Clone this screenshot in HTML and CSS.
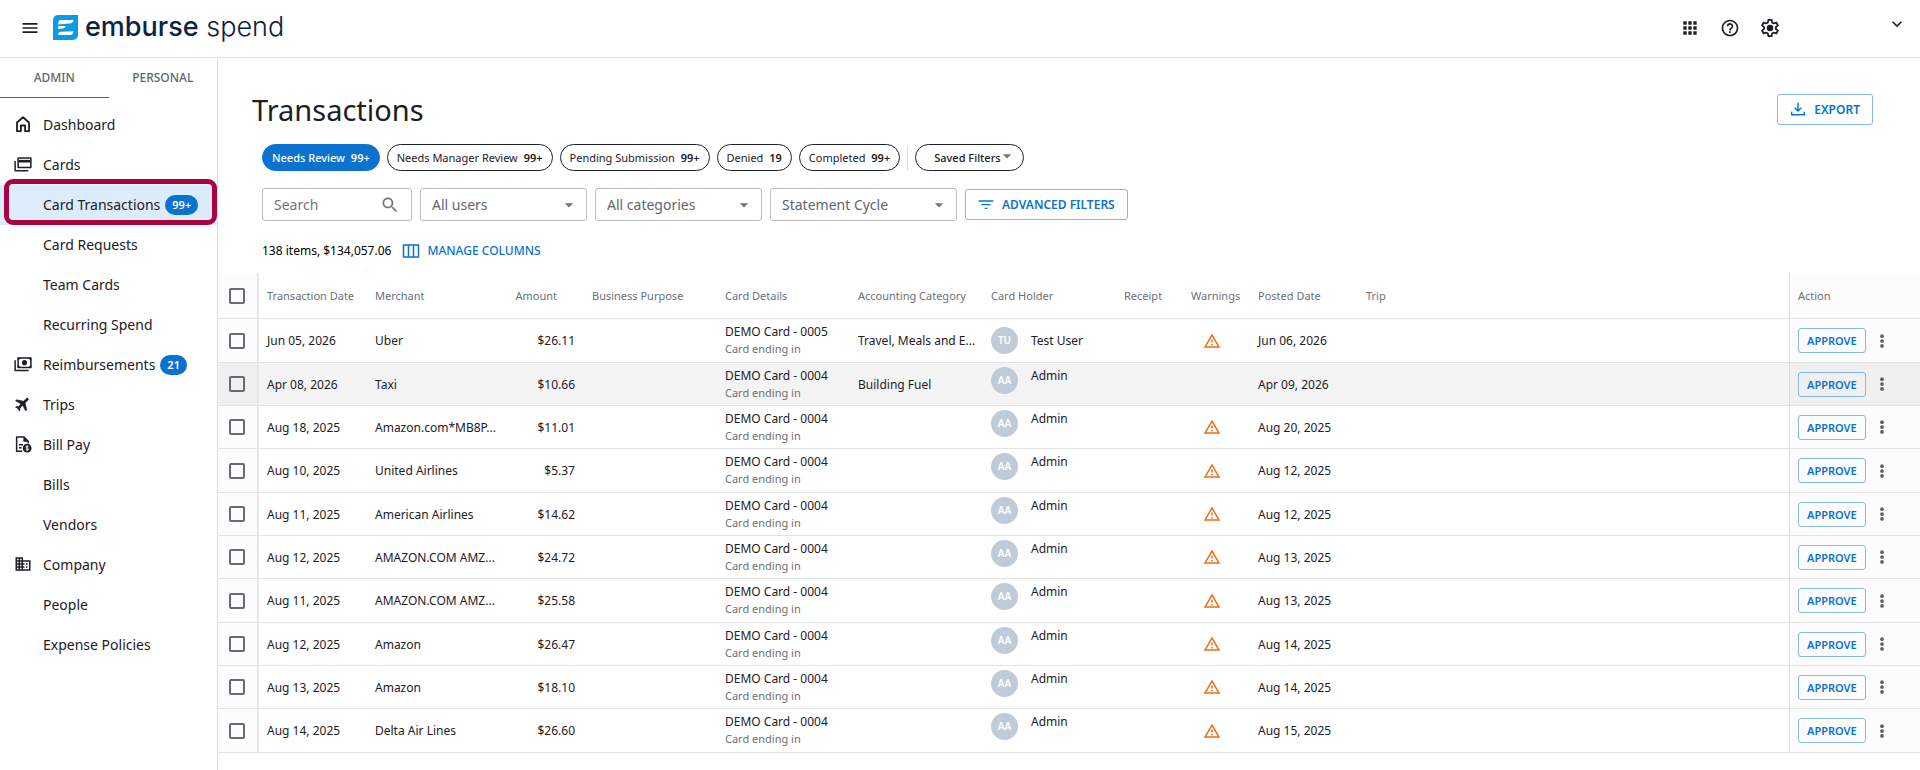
FILE: index.html
```html
<!DOCTYPE html>
<html lang="en">
  <head>
    <meta charset="UTF-8" />
    <meta name="viewport" content="width=device-width, initial-scale=1.0" />
    <title>Transactions - Emburse Spend</title>
    <link rel="stylesheet" href="styles.css">
  </head>
  <body>
    <!-- Shared icons -->
    <svg class="sprite" aria-hidden="true">
      <symbol id="i-warning" viewBox="0 0 24 24">
        <path d="M12 5.99L19.53 19H4.47L12 5.99M12 2L1 21h22L12 2zm1 14h-2v2h2v-2zm0-6h-2v4h2v-4z" />
      </symbol>
      <symbol id="i-more" viewBox="0 0 24 24">
        <circle cx="12" cy="5.5" r="2.5" />
        <circle cx="12" cy="12" r="2.5" />
        <circle cx="12" cy="18.5" r="2.5" />
      </symbol>
      <symbol id="i-caret" viewBox="0 0 24 24">
        <path d="M7 10l5 5 5-5z" />
      </symbol>
    </svg>

    <header class="topbar">
      <button class="icon-btn" aria-label="Menu">
        <svg viewBox="0 0 24 24"><path d="M3 18h18v-2H3v2zm0-5h18v-2H3v2zm0-7v2h18V6H3z" /></svg>
      </button>
      <a href="#" class="logo">
        <svg viewBox="0 0 25 25">
          <path d="M5 0h20v20a5 5 0 0 1-5 5H0V5a5 5 0 0 1 5-5z" fill="#0a9be3" />
          <path d="M8 5h12.500q-.6 3.400-4 3.600L5.200 9.600Q5 5 8 5z" fill="#fff" />
          <path d="M5.200 10.900h7.600q-.6 2.400-3 2.600l-4.600.5z" fill="#fff" />
          <path d="M5 20q.2-3 3-3.200l12.500-.6q-.4 3.600-3.600 3.800z" fill="#fff" />
        </svg>
        <span class="logo-text"><b>emburse</b> spend</span>
      </a>
      <div class="topbar-actions">
        <button class="icon-btn" aria-label="Apps">
          <svg viewBox="0 0 24 24"><path d="M4 8h4V4H4v4zm6 12h4v-4h-4v4zm-6 0h4v-4H4v4zm0-6h4v-4H4v4zm6 0h4v-4h-4v4zm6-10v4h4V4h-4zm-6 4h4V4h-4v4zm6 6h4v-4h-4v4zm0 6h4v-4h-4v4z" /></svg>
        </button>
        <button class="icon-btn" aria-label="Help">
          <svg viewBox="0 0 24 24"><path d="M11 18h2v-2h-2v2zm1-16C6.480 2 2 6.480 2 12s4.480 10 10 10 10-4.480 10-10S17.520 2 12 2zm0 18c-4.410 0-8-3.590-8-8s3.590-8 8-8 8 3.590 8 8-3.590 8-8 8zm0-14c-2.210 0-4 1.790-4 4h2c0-1.100.9-2 2-2s2 .9 2 2c0 2-3 1.750-3 5h2c0-2.250 3-2.500 3-5 0-2.210-1.790-4-4-4z" /></svg>
        </button>
        <button class="icon-btn" aria-label="Settings">
          <svg viewBox="1 1 22 22">
            <path fill="none" stroke="currentColor" stroke-width="2" stroke-linejoin="round" d="M10.200 3h3.600l.5 2.900 1.900 1.100 2.700-1 1.800 3.100-2.200 1.900v2.100l2.200 1.800-1.800 3.100-2.700-1-1.900 1.100-.5 2.900h-3.600l-.5-2.900L7.800 17l-2.700 1-1.800-3.100L5.500 13v-2L3.300 9.100 5.100 6l2.700 1 1.900-1.100z" />
            <circle cx="12" cy="12" r="3.600" />
          </svg>
        </button>
        <button class="icon-btn account-btn" aria-label="Account">
          <svg viewBox="0 0 24 24"><path d="M16.590 8.590L12 13.170 7.410 8.590 6 10l6 6 6-6z" /></svg>
        </button>
      </div>
    </header>

    <div class="layout">
      <aside class="sidebar">
        <div class="tabs">
          <button class="tab active">ADMIN</button>
          <button class="tab">PERSONAL</button>
        </div>
        <nav class="menu">
          <a href="#" class="menu-item">
            <svg viewBox="0 0 24 24"><path fill="none" stroke="currentColor" stroke-width="2.400" stroke-linejoin="round" d="M4 10l8-7 8 7v11.500h-5.200V14H9.200v7.500H4z" /></svg>
            Dashboard
          </a>
          <a href="#" class="menu-item">
            <svg viewBox="0 0 24 24">
              <path fill="none" stroke="currentColor" stroke-width="2" stroke-linejoin="round" d="M5.500 4h17v12.500h-17zM1.500 8v13h17.500" />
              <path d="M6 6.500h16v3.500H6z" />
            </svg>
            Cards
          </a>
          <a href="#" class="menu-item selected">Card Transactions <span class="badge">99+</span></a>
          <a href="#" class="menu-item">Card Requests</a>
          <a href="#" class="menu-item">Team Cards</a>
          <a href="#" class="menu-item">Recurring Spend</a>
          <a href="#" class="menu-item">
            <svg viewBox="0 0 24 24">
              <path fill="none" stroke="currentColor" stroke-width="2" stroke-linejoin="round" d="M5.500 4h17v12.500h-17zM1.500 7v13.500h18" />
              <path d="M5 3.500h4.500L5 8zM23 3.500h-4.500L23 8zM5 17h4.500L5 12.500zM23 17h-4.500l4.500-4.500z" />
              <circle cx="14" cy="10.200" r="3.400" />
            </svg>
            Reimbursements <span class="badge">21</span>
          </a>
          <a href="#" class="menu-item">
            <svg viewBox="0 0 24 24"><path transform="rotate(45 12 12)" stroke="currentColor" stroke-width=".8" d="M21 16v-2l-8-5V3.500c0-.83-.67-1.500-1.500-1.500S10 2.670 10 3.500V9l-8 5v2l8-2.500V19l-2 1.500V22l3.500-1 3.500 1v-1.500L13 19v-5.500l8 2.500z" /></svg>
            Trips
          </a>
          <a href="#" class="menu-item">
            <svg viewBox="0 0 24 24">
              <path fill="none" stroke="currentColor" stroke-width="2" stroke-linejoin="round" d="M11 21.500H3.500v-19H13l6 6V11M6.500 13H12M6.500 17H10" />
              <path d="M12.500 2.500v6.500H19z" />
              <circle cx="17.500" cy="17.500" r="5.800" />
              <path fill="none" stroke="#fff" stroke-width="1.200" d="M19.400 15.700q-1.800-1.300-3.300-.3c-.9 1 .3 1.900 1.500 2.200 1.400.3 2.300 1.100 1.300 2q-1.500.9-3.300-.3M17.500 13.700v7.600" />
            </svg>
            Bill Pay
          </a>
          <a href="#" class="menu-item">Bills</a>
          <a href="#" class="menu-item">Vendors</a>
          <a href="#" class="menu-item">
            <svg viewBox="0 0 24 24"><path d="M12 7V3H2v18h20V7H12zM6 19H4v-2h2v2zm0-4H4v-2h2v2zm0-4H4V9h2v2zm0-4H4V5h2v2zm4 12H8v-2h2v2zm0-4H8v-2h2v2zm0-4H8V9h2v2zm0-4H8V5h2v2zm10 12h-8v-2h2v-2h-2v-2h2v-2h-2V9h8v10zm-2-8h-2v2h2v-2zm0 4h-2v2h2v-2z" /></svg>
            Company
          </a>
          <a href="#" class="menu-item">People</a>
          <a href="#" class="menu-item">Expense Policies</a>
        </nav>
      </aside>

      <main class="main">
        <div class="page-header">
          <h1>Transactions</h1>
          <button class="btn">
            <svg viewBox="0 0 24 24"><path fill="none" stroke="currentColor" stroke-width="2.200" d="M12 2.500v12M7 10l5 5 5-5M2.500 16v4.500h19V16" /></svg>
            EXPORT
          </button>
        </div>

        <div class="chips">
          <button class="chip chip-active">Needs Review <b>99+</b></button>
          <button class="chip">Needs Manager Review <b>99+</b></button>
          <button class="chip">Pending Submission <b>99+</b></button>
          <button class="chip">Denied <b>19</b></button>
          <button class="chip">Completed <b>99+</b></button>
          <span class="chip-divider"></span>
          <div class="saved-filters">
            <select aria-label="Saved Filters"><option>Saved Filters</option></select>
            <svg><use href="#i-caret" /></svg>
          </div>
        </div>

        <div class="filters">
          <div class="field field-search">
            <input type="text" placeholder="Search" aria-label="Search" />
            <svg viewBox="0 0 24 24"><path d="M15.500 14h-.79l-.28-.27C15.410 12.590 16 11.110 16 9.500 16 5.910 13.090 3 9.500 3S3 5.910 3 9.500 5.910 16 9.500 16c1.610 0 3.090-.59 4.230-1.570l.27.28v.79l5 4.990L20.490 19l-4.990-5zm-6 0C7.010 14 5 11.990 5 9.500S7.010 5 9.500 5 14 7.010 14 9.500 11.990 14 9.500 14z" /></svg>
          </div>
          <div class="field">
            <select aria-label="Users"><option>All users</option></select>
            <svg><use href="#i-caret" /></svg>
          </div>
          <div class="field">
            <select aria-label="Categories"><option>All categories</option></select>
            <svg><use href="#i-caret" /></svg>
          </div>
          <div class="field field-cycle">
            <select aria-label="Statement Cycle"><option>Statement Cycle</option></select>
            <svg><use href="#i-caret" /></svg>
          </div>
          <button class="btn">
            <svg viewBox="0 0 24 24"><path d="M10 18h4v-2h-4v2zM1 5v2h22V5H1zm4 7.500h14v-2H5v2z" /></svg>
            ADVANCED FILTERS
          </button>
        </div>

        <div class="summary">
          <span>138 items, $134,057.06</span>
          <button class="link-btn">
            <svg viewBox="0 0 18 16"><path fill="none" stroke="currentColor" stroke-width="1.500" d="M1.500 2h15v12h-15zM6.500 2v12M11.500 2v12" /></svg>
            MANAGE COLUMNS
          </button>
        </div>

        <table class="table">
          <colgroup>
            <col class="col-check"><col class="col-date"><col class="col-merchant"><col class="col-amount">
            <col class="col-wide"><col class="col-wide"><col class="col-wide"><col class="col-wide">
            <col class="col-flag"><col class="col-flag"><col class="col-date"><col><col class="col-action">
          </colgroup>
          <thead>
            <tr>
              <th class="check"><input type="checkbox" aria-label="Select all" /></th>
              <th>Transaction Date</th>
              <th>Merchant</th>
              <th class="amount">Amount</th>
              <th>Business Purpose</th>
              <th>Card Details</th>
              <th>Accounting Category</th>
              <th>Card Holder</th>
              <th>Receipt</th>
              <th>Warnings</th>
              <th>Posted Date</th>
              <th>Trip</th>
              <th class="action">Action</th>
            </tr>
          </thead>
          <tbody>
            <tr>
              <td class="check"><input type="checkbox" aria-label="Select Uber" /></td>
              <td>Jun 05, 2026</td>
              <td>Uber</td>
              <td class="amount">$26.11</td>
              <td></td>
              <td><div class="card-name">DEMO Card - 0005</div><div class="card-end">Card ending in</div></td>
              <td>Travel, Meals and E...</td>
              <td><div class="holder"><span class="avatar">TU</span><span>Test User</span></div></td>
              <td></td>
              <td class="warn"><svg><use href="#i-warning" /></svg></td>
              <td>Jun 06, 2026</td>
              <td></td>
              <td class="action"><div class="actions"><button class="btn btn-small">APPROVE</button><button class="more" aria-label="More"><svg><use href="#i-more" /></svg></button></div></td>
            </tr>
            <tr class="hovered">
              <td class="check"><input type="checkbox" aria-label="Select Taxi" /></td>
              <td>Apr 08, 2026</td>
              <td>Taxi</td>
              <td class="amount">$10.66</td>
              <td></td>
              <td><div class="card-name">DEMO Card - 0004</div><div class="card-end">Card ending in</div></td>
              <td>Building Fuel</td>
              <td><div class="holder holder-top"><span class="avatar">AA</span><span>Admin</span></div></td>
              <td></td>
              <td></td>
              <td>Apr 09, 2026</td>
              <td></td>
              <td class="action"><div class="actions"><button class="btn btn-small">APPROVE</button><button class="more" aria-label="More"><svg><use href="#i-more" /></svg></button></div></td>
            </tr>
            <tr>
              <td class="check"><input type="checkbox" aria-label="Select Amazon.com" /></td>
              <td>Aug 18, 2025</td>
              <td>Amazon.com*MB8P...</td>
              <td class="amount">$11.01</td>
              <td></td>
              <td><div class="card-name">DEMO Card - 0004</div><div class="card-end">Card ending in</div></td>
              <td></td>
              <td><div class="holder holder-top"><span class="avatar">AA</span><span>Admin</span></div></td>
              <td></td>
              <td class="warn"><svg><use href="#i-warning" /></svg></td>
              <td>Aug 20, 2025</td>
              <td></td>
              <td class="action"><div class="actions"><button class="btn btn-small">APPROVE</button><button class="more" aria-label="More"><svg><use href="#i-more" /></svg></button></div></td>
            </tr>
            <tr>
              <td class="check"><input type="checkbox" aria-label="Select United Airlines" /></td>
              <td>Aug 10, 2025</td>
              <td>United Airlines</td>
              <td class="amount">$5.37</td>
              <td></td>
              <td><div class="card-name">DEMO Card - 0004</div><div class="card-end">Card ending in</div></td>
              <td></td>
              <td><div class="holder holder-top"><span class="avatar">AA</span><span>Admin</span></div></td>
              <td></td>
              <td class="warn"><svg><use href="#i-warning" /></svg></td>
              <td>Aug 12, 2025</td>
              <td></td>
              <td class="action"><div class="actions"><button class="btn btn-small">APPROVE</button><button class="more" aria-label="More"><svg><use href="#i-more" /></svg></button></div></td>
            </tr>
            <tr>
              <td class="check"><input type="checkbox" aria-label="Select American Airlines" /></td>
              <td>Aug 11, 2025</td>
              <td>American Airlines</td>
              <td class="amount">$14.62</td>
              <td></td>
              <td><div class="card-name">DEMO Card - 0004</div><div class="card-end">Card ending in</div></td>
              <td></td>
              <td><div class="holder holder-top"><span class="avatar">AA</span><span>Admin</span></div></td>
              <td></td>
              <td class="warn"><svg><use href="#i-warning" /></svg></td>
              <td>Aug 12, 2025</td>
              <td></td>
              <td class="action"><div class="actions"><button class="btn btn-small">APPROVE</button><button class="more" aria-label="More"><svg><use href="#i-more" /></svg></button></div></td>
            </tr>
            <tr>
              <td class="check"><input type="checkbox" aria-label="Select Amazon" /></td>
              <td>Aug 12, 2025</td>
              <td>AMAZON.COM AMZ...</td>
              <td class="amount">$24.72</td>
              <td></td>
              <td><div class="card-name">DEMO Card - 0004</div><div class="card-end">Card ending in</div></td>
              <td></td>
              <td><div class="holder holder-top"><span class="avatar">AA</span><span>Admin</span></div></td>
              <td></td>
              <td class="warn"><svg><use href="#i-warning" /></svg></td>
              <td>Aug 13, 2025</td>
              <td></td>
              <td class="action"><div class="actions"><button class="btn btn-small">APPROVE</button><button class="more" aria-label="More"><svg><use href="#i-more" /></svg></button></div></td>
            </tr>
            <tr>
              <td class="check"><input type="checkbox" aria-label="Select Amazon" /></td>
              <td>Aug 11, 2025</td>
              <td>AMAZON.COM AMZ...</td>
              <td class="amount">$25.58</td>
              <td></td>
              <td><div class="card-name">DEMO Card - 0004</div><div class="card-end">Card ending in</div></td>
              <td></td>
              <td><div class="holder holder-top"><span class="avatar">AA</span><span>Admin</span></div></td>
              <td></td>
              <td class="warn"><svg><use href="#i-warning" /></svg></td>
              <td>Aug 13, 2025</td>
              <td></td>
              <td class="action"><div class="actions"><button class="btn btn-small">APPROVE</button><button class="more" aria-label="More"><svg><use href="#i-more" /></svg></button></div></td>
            </tr>
            <tr>
              <td class="check"><input type="checkbox" aria-label="Select Amazon" /></td>
              <td>Aug 12, 2025</td>
              <td>Amazon</td>
              <td class="amount">$26.47</td>
              <td></td>
              <td><div class="card-name">DEMO Card - 0004</div><div class="card-end">Card ending in</div></td>
              <td></td>
              <td><div class="holder holder-top"><span class="avatar">AA</span><span>Admin</span></div></td>
              <td></td>
              <td class="warn"><svg><use href="#i-warning" /></svg></td>
              <td>Aug 14, 2025</td>
              <td></td>
              <td class="action"><div class="actions"><button class="btn btn-small">APPROVE</button><button class="more" aria-label="More"><svg><use href="#i-more" /></svg></button></div></td>
            </tr>
            <tr>
              <td class="check"><input type="checkbox" aria-label="Select Amazon" /></td>
              <td>Aug 13, 2025</td>
              <td>Amazon</td>
              <td class="amount">$18.10</td>
              <td></td>
              <td><div class="card-name">DEMO Card - 0004</div><div class="card-end">Card ending in</div></td>
              <td></td>
              <td><div class="holder holder-top"><span class="avatar">AA</span><span>Admin</span></div></td>
              <td></td>
              <td class="warn"><svg><use href="#i-warning" /></svg></td>
              <td>Aug 14, 2025</td>
              <td></td>
              <td class="action"><div class="actions"><button class="btn btn-small">APPROVE</button><button class="more" aria-label="More"><svg><use href="#i-more" /></svg></button></div></td>
            </tr>
            <tr>
              <td class="check"><input type="checkbox" aria-label="Select Delta Air Lines" /></td>
              <td>Aug 14, 2025</td>
              <td>Delta Air Lines</td>
              <td class="amount">$26.60</td>
              <td></td>
              <td><div class="card-name">DEMO Card - 0004</div><div class="card-end">Card ending in</div></td>
              <td></td>
              <td><div class="holder holder-top"><span class="avatar">AA</span><span>Admin</span></div></td>
              <td></td>
              <td class="warn"><svg><use href="#i-warning" /></svg></td>
              <td>Aug 15, 2025</td>
              <td></td>
              <td class="action"><div class="actions"><button class="btn btn-small">APPROVE</button><button class="more" aria-label="More"><svg><use href="#i-more" /></svg></button></div></td>
            </tr>
          </tbody>
        </table>
      </main>
    </div>
  </body>
</html>
```

FILE: styles.css
```css
* {
  margin: 0;
  padding: 0;
  box-sizing: border-box;
}

body {
  font-family: "Noto Sans", sans-serif;
  font-size: 12px;
  color: #1c2024;
  background: white;
  min-height: 100vh;
  display: flex;
  flex-direction: column;
}

button,
input,
select {
  font: inherit;
  color: inherit;
  background: none;
  border: none;
}

button {
  cursor: pointer;
}

a {
  color: inherit;
  text-decoration: none;
}

svg {
  fill: currentColor;
  flex-shrink: 0;
}

.sprite {
  display: none;
}

/* Top bar */
.topbar {
  display: flex;
  align-items: center;
  height: 58px;
  padding: 0 13px 2px 20px;
  border-bottom: 1px solid #e0e0e0;
}

.icon-btn,
.icon-btn svg {
  display: block;
  width: 20px;
  height: 20px;
}

.logo {
  display: flex;
  align-items: center;
  gap: 7px;
  margin-left: 13px;
}

.logo svg {
  width: 25px;
  height: 25px;
}

.logo-text {
  padding-bottom: 2px;
  font-family: Inter, sans-serif;
  font-size: 27px;
  font-weight: 300;
  line-height: 28px;
  color: #0d2240;
}

.logo-text b {
  font-weight: 500;
}

.topbar-actions {
  display: flex;
  align-items: center;
  gap: 20px;
  margin-left: auto;
}

.account-btn {
  margin: 0 0 8px 87px;
}

/* Sidebar */
.layout {
  display: flex;
  flex: 1;
}

.sidebar {
  width: 218px;
  flex-shrink: 0;
  border-right: 1px solid #e0e0e0;
}

.tabs {
  display: flex;
  height: 40px;
  margin-bottom: 7px;
}

.tab {
  flex: 1;
  font-weight: 500;
  color: #62666c;
  border-bottom: 1px solid transparent;
}

.tab.active {
  border-color: #5c6066;
}

.menu-item {
  display: flex;
  align-items: center;
  height: 40px;
  padding: 0 0 2px 43px;
  font-size: 14px;
}

.menu-item svg {
  width: 18px;
  height: 18px;
  margin: 0 11px 0 -29px;
}

.menu-item.selected {
  position: relative;
  background: #dcecfb;
}

.menu-item.selected::after {
  content: "";
  position: absolute;
  inset: -6px 0 0 4px;
  border: 5px solid #a9043f;
  border-radius: 9px;
}

.badge {
  padding: 0 7px;
  margin: 2px 0 0 5px;
  border-radius: 10px;
  background: #0b72d0;
  color: white;
  font-size: 11px;
  font-weight: 600;
  line-height: 20px;
}

/* Page */
.main {
  flex: 1;
  min-width: 0;
}

.page-header {
  display: flex;
  align-items: center;
  justify-content: space-between;
  padding: 32px 47px 0 34px;
}

h1 {
  font-size: 29px;
  font-weight: 400;
  line-height: 40px;
}

.btn {
  display: flex;
  align-items: center;
  gap: 8px;
  height: 31px;
  padding: 0 12px;
  border: 1px solid #85b8e8;
  border-radius: 3px;
  color: #0b72d0;
  font-weight: 600;
}

.btn svg {
  width: 16px;
  height: 16px;
}

.page-header .btn {
  margin-bottom: 2px;
}

.chips {
  display: flex;
  align-items: center;
  gap: 7px;
  padding: 14px 44px 0;
}

.chip {
  height: 27px;
  padding: 0 9px;
  border: 1px solid #1c2024;
  border-radius: 14px;
  font-size: 11px;
}

.chip b {
  margin-left: 3px;
  font-weight: 600;
}

.chip-active {
  background: #0b72d0;
  border-color: #0b72d0;
  color: white;
  font-weight: 500;
}

.chip-divider {
  width: 1px;
  height: 24px;
  background: #dcdcdc;
}

.saved-filters {
  display: flex;
  width: 109px;
  height: 27px;
  border: 1px solid #1c2024;
  border-radius: 14px;
}

select {
  appearance: none;
}

.saved-filters select {
  width: 100%;
  padding-left: 18px;
  font-size: 11px;
  font-weight: 500;
}

.saved-filters svg {
  width: 20px;
  height: 20px;
  margin: 1px 6px 0 -26px;
  color: #757575;
  pointer-events: none;
}

.filters {
  display: flex;
  align-items: center;
  gap: 8px;
  padding: 17px 44px 0;
}

.field {
  display: flex;
  align-items: center;
  width: 167px;
  height: 33px;
  padding-right: 7px;
  border: 1px solid #bdbdbd;
  border-radius: 3px;
  color: #62666c;
  font-size: 14px;
}

.field-search {
  width: 150px;
  padding-right: 11px;
}

.field-cycle {
  width: 187px;
}

.field input,
.field select {
  flex: 1;
  min-width: 0;
  height: 31px;
  padding-left: 11px;
}

.field input::placeholder {
  color: #757575;
}

.field svg {
  width: 20px;
  height: 20px;
  color: #757575;
  pointer-events: none;
}

.summary {
  display: flex;
  align-items: flex-start;
  gap: 11px;
  height: 52px;
  padding: 18px 44px 0;
  line-height: 24px;
  color: black;
}

.link-btn {
  display: flex;
  align-items: center;
  gap: 7px;
  color: #0b72d0;
  font-weight: 500;
}

.link-btn svg {
  width: 18px;
  height: 16px;
}

/* Transactions table */
.table {
  width: 100%;
  table-layout: fixed;
  border-collapse: separate;
  border-spacing: 0;
}

.col-check {
  width: 41px;
}

.col-date {
  width: 108px;
}

.col-merchant {
  width: 141px;
}

.col-amount {
  width: 76px;
}

.col-wide {
  width: 133px;
}

.col-flag {
  width: 67px;
}

.col-action {
  width: 131px;
}

th,
td {
  padding: 0 8px;
  border-bottom: 1px solid #e2e3e5;
  text-align: left;
  vertical-align: middle;
  white-space: nowrap;
}

th {
  height: 46px;
  color: #6b6f76;
  font-size: 11px;
  font-weight: 400;
}

td {
  height: 43px;
}

tr:nth-child(3n + 1) td {
  height: 44px;
}

.amount {
  padding-right: 9px;
  text-align: right;
}

th.amount {
  padding: 0 27px 0 0;
}

.check {
  padding: 0 0 0 11px;
  background: #fcfcfc;
  border-right: 2px solid #e6e6e6;
}

.action {
  background: #fcfcfc;
  border-left: 1px solid #dcdcdc;
}

.hovered td {
  background: #f4f4f4;
}

.hovered .check,
.hovered .action {
  background: #f0f0f0;
}

.check input {
  appearance: none;
  display: block;
  width: 16px;
  height: 16px;
  border: 2px solid #676b76;
  border-radius: 2px;
}

.card-name {
  line-height: 17px;
}

.card-end {
  padding-bottom: 1px;
  color: #6b6f76;
  font-size: 11px;
  line-height: 17px;
}

.holder {
  display: flex;
  align-items: center;
  gap: 13px;
}

.holder-top {
  height: 35px;
  align-items: flex-start;
  line-height: 17px;
}

.avatar {
  width: 27px;
  height: 27px;
  flex-shrink: 0;
  border-radius: 50%;
  background: #bfcbd9;
  color: white;
  font-size: 10px;
  font-weight: 600;
  line-height: 27px;
  text-align: center;
}

.warn {
  color: #ef6c13;
}

.warn svg {
  display: block;
  width: 18px;
  height: 18px;
  margin-left: 12px;
}

.actions {
  display: flex;
  align-items: center;
  gap: 6px;
}

.btn-small {
  height: 25px;
  padding: 0 8px;
  font-size: 11px;
}

.more,
.more svg {
  display: block;
  width: 20px;
  height: 18px;
  color: #5c6066;
}
```
